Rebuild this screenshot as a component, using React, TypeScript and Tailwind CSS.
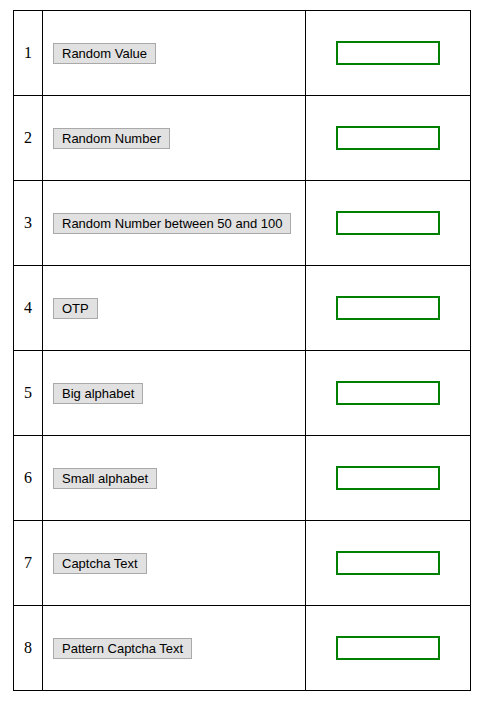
const ROWS = [
	"Random Value",
	"Random Number",
	"Random Number between 50 and 100",
	"OTP",
	"Big alphabet",
	"Small alphabet",
	"Captcha Text",
	"Pattern Captcha Text",
];

export default function App() {
	return (
		<div className="min-h-screen bg-white pt-[10px] pl-[13px]">
			<table className="border-collapse table-fixed w-[457px]">
				<colgroup>
					<col className="w-[29px]" />
					<col className="w-[263px]" />
					<col className="w-[165px]" />
				</colgroup>
				<tbody>
					{ROWS.map((label, i) => (
						<tr key={label} className="h-[85px]">
							<td className="border border-black p-0 text-center align-middle font-['Liberation_Serif',serif] text-[16px] text-black">
								{i + 1}
							</td>
							<td className="border border-black pl-[10px] pb-[2px] align-middle">
								<button
									type="button"
									className="border border-[#a9a9a9] bg-[#e1e1e1] px-[8px] py-[2px] font-['Liberation_Sans',Arial,sans-serif] text-[13px] leading-[15px] text-black"
								>
									{label}
								</button>
							</td>
							<td className="border border-black p-0 pb-[2px] text-center align-middle">
								<input
									type="text"
									className="inline-block h-[24px] w-[104px] border-2 border-[#008000] bg-white outline-none align-middle"
								/>
							</td>
						</tr>
					))}
				</tbody>
			</table>
		</div>
	);
}
